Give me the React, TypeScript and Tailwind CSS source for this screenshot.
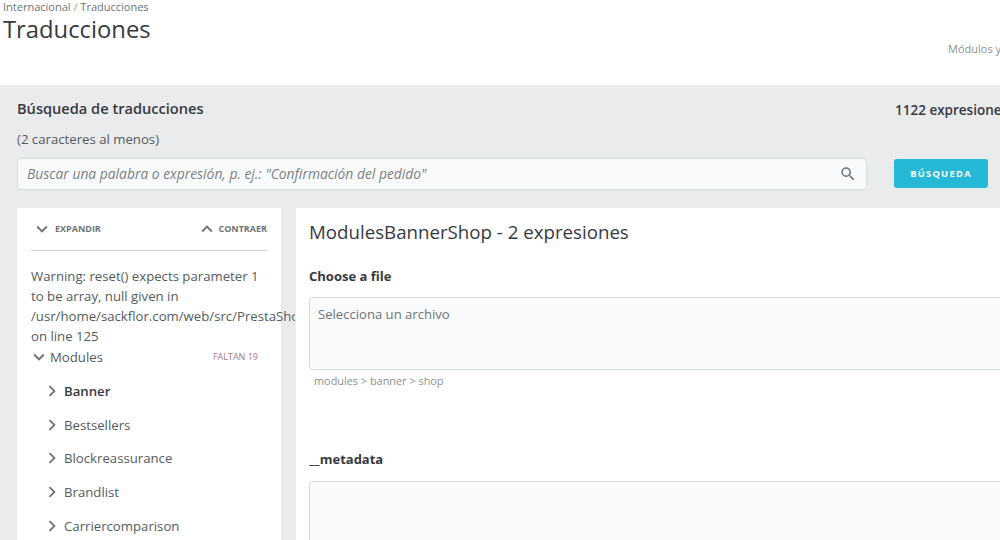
import { MdKeyboardArrowDown, MdKeyboardArrowRight, MdKeyboardArrowUp, MdSearch } from "react-icons/md";

const modules = ["Banner", "Bestsellers", "Blockreassurance", "Brandlist", "Carriercomparison"];

export default function App() {
  return (
    <div className="w-[1000px] h-[540px] overflow-hidden bg-[#eaebec] text-[#363a41] font-['Open_Sans',sans-serif]">
      <header className="relative h-[85px] bg-white pl-[3px] overflow-hidden">
        <div className="text-[11px] leading-[14px] text-[#6c7479]">
          Internacional <span className="text-[#a0a6aa]">/</span> Traducciones
        </div>
        <h1 className="text-[23.8px] leading-[30px] text-[#363a41]">Traducciones</h1>
        <a className="absolute left-[948px] top-[41px] text-[11px] leading-[15px] whitespace-nowrap text-[#8a9197]">
          Módulos y
        </a>
      </header>

      <main className="pl-[17px]">
        <div className="flex justify-between w-[1100px] pt-[13px] h-[44px]">
          <h2 className="text-[14.6px] leading-[20px] font-semibold">Búsqueda de traducciones</h2>
          <span className="w-[222px] mt-[2px] text-[13.5px] leading-[20px] font-semibold whitespace-nowrap">
            1122 expresiones
          </span>
        </div>
        <p className="mt-[1px] text-[13.2px] leading-[18px] text-[#555b60]">(2 caracteres al menos)</p>
        <div className="mt-[10px] flex items-center gap-[27px]">
          <div className="flex items-center justify-between w-[850px] h-[32px] pl-[9px] pr-[9px] bg-[#f9fafb] border border-[#d5dde0] rounded-[4px]">
            <span className="text-[13.85px] italic text-[#7a8186]">
              Buscar una palabra o expresión, p. ej.: "Confirmación del pedido"
            </span>
            <MdSearch className="w-[18px] h-[18px] text-[#6c7479]" />
          </div>
          <button className="-mt-[1px] w-[94px] h-[29px] bg-[#25b9d7] rounded-[3px] text-white text-[9.3px] font-bold tracking-[1.3px]">
            BÚSQUEDA
          </button>
        </div>

        <div className="mt-[18px] flex gap-[15px] items-start">
          <aside className="w-[264px] h-[340px] bg-white pl-[14px] pr-[14px]">
            <div className="flex items-center justify-between h-[43px] border-b border-[#cfd6da] text-[9px] font-bold text-[#6c7479]">
              <span className="flex items-center gap-[2px]">
                <MdKeyboardArrowDown className="w-[22px] h-[22px]" />
                EXPANDIR
              </span>
              <span className="flex items-center">
                <MdKeyboardArrowUp className="w-[22px] h-[22px]" />
                CONTRAER
              </span>
            </div>
            <div className="mt-[15px] text-[13.2px] leading-[20px] text-[#555b60] whitespace-nowrap">
              <div className="overflow-hidden w-[264px] -mr-[14px]">
                Warning: reset() expects parameter 1
                <br />
                to be array, null given in
                <br />
                /usr/home/sackflor.com/web/src/PrestaShop
                <br />
                on line 125
              </div>
              <div className="flex items-center justify-between pr-[9px] h-[21px]">
                <span className="flex items-center -ml-[3px]">
                  <MdKeyboardArrowDown className="w-[22px] h-[22px] text-[#6c7479]" />
                  Modules
                </span>
                <span className="text-[9px] text-[#a9798a]">FALTAN 19</span>
              </div>
              <ul className="mt-[7px] pl-[10px]">
                {modules.map((name, i) => (
                  <li key={name} className={`flex items-center gap-[1px] h-[33.7px] ${i === 0 ? "font-semibold text-[#363a41]" : ""}`}>
                    <MdKeyboardArrowRight className="w-[22px] h-[22px] text-[#6c7479]" />
                    {name}
                  </li>
                ))}
              </ul>
            </div>
          </aside>

          <section className="w-[800px] h-[340px] bg-white pl-[13px]">
            <h3 className="mt-[12px] text-[18.7px] leading-[24px] text-[#363a41]">ModulesBannerShop - 2 expresiones</h3>
            <h4 className="mt-[23px] text-[13px] leading-[18px] font-bold">Choose a file</h4>
            <div className="mt-[12px] w-[800px] h-[73px] px-[8px] py-[6px] bg-[#f9fafb] border border-[#d5dde0] rounded-[4px] text-[13.1px] leading-[20px] text-[#6c7479]">
              Selecciona un archivo
            </div>
            <p className="mt-[3px] pl-[5px] text-[10.9px] leading-[16px] text-[#8a9197]">modules &gt; banner &gt; shop</p>
            <h4 className="mt-[61px] text-[13px] leading-[18px] font-bold">__metadata</h4>
            <div className="mt-[13px] w-[800px] h-[80px] bg-[#f9fafb] border border-[#d5dde0] rounded-[4px]" />
          </section>
        </div>
      </main>
    </div>
  );
}
